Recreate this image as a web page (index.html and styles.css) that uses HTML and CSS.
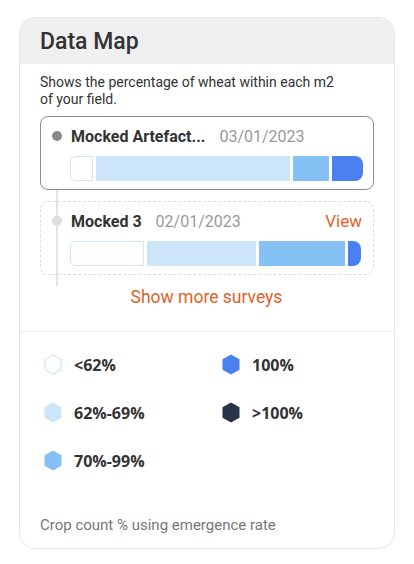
FILE: index.html
```html
<!DOCTYPE html>
<html>
<head>
<meta charset="utf-8">
<link rel="stylesheet" href="styles.css">
</head>
<body>
<div class="card">
  <div class="card-header"><h1 class="title">Data Map</h1></div>
  <div class="card-body">
    <p class="desc">Shows the percentage of wheat within each m2<br>of your field.</p>
    <div class="surveys">
      <div class="survey survey-active">
        <div class="survey-head">
          <span class="dot"></span>
          <span class="name">Mocked Artefact...</span>
          <span class="date">03/01/2023</span>
        </div>
        <div class="bar">
          <span class="seg seg-empty" style="width:23px"></span>
          <span class="seg seg-light" style="width:194px"></span>
          <span class="seg seg-mid" style="width:36px"></span>
          <span class="seg seg-blue" style="width:31px"></span>
        </div>
      </div>
      <div class="survey survey-other">
        <div class="survey-head">
          <span class="dot dot-light"></span>
          <span class="name">Mocked 3</span>
          <span class="date">02/01/2023</span>
          <span class="view">View</span>
        </div>
        <div class="bar">
          <span class="seg seg-empty" style="width:74px"></span>
          <span class="seg seg-light" style="width:109px"></span>
          <span class="seg seg-mid" style="width:86px"></span>
          <span class="seg seg-blue" style="width:13px"></span>
        </div>
      </div>
    </div>
    <div class="more">Show more surveys</div>
  </div>
  <div class="legend">
    <div class="legend-item"><svg class="hex" viewBox="0 0 18 21"><polygon points="9,1 17,5.5 17,15.5 9,20 1,15.5 1,5.5" fill="#fff" stroke="#cfe6f8" stroke-width="1.2"/></svg><span>&lt;62%</span></div>
    <div class="legend-item"><svg class="hex" viewBox="0 0 18 21"><polygon points="9,0.5 17.5,5.3 17.5,15.7 9,20.5 0.5,15.7 0.5,5.3" fill="#4a80f0"/></svg><span>100%</span></div>
    <div class="legend-item"><svg class="hex" viewBox="0 0 18 21"><polygon points="9,0.5 17.5,5.3 17.5,15.7 9,20.5 0.5,15.7 0.5,5.3" fill="#cce5f8"/></svg><span>62%-69%</span></div>
    <div class="legend-item"><svg class="hex" viewBox="0 0 18 21"><polygon points="9,0.5 17.5,5.3 17.5,15.7 9,20.5 0.5,15.7 0.5,5.3" fill="#283347"/></svg><span>&gt;100%</span></div>
    <div class="legend-item"><svg class="hex" viewBox="0 0 18 21"><polygon points="9,0.5 17.5,5.3 17.5,15.7 9,20.5 0.5,15.7 0.5,5.3" fill="#85c1f5"/></svg><span>70%-99%</span></div>
  </div>
  <p class="foot">Crop count % using emergence rate</p>
</div>
</body>
</html>
```

FILE: styles.css
```css
* { box-sizing: border-box; }
body {
  margin: 0;
  padding: 17px 19px 0 19px;
  background: #fff;
  font-family: Roboto, "Liberation Sans", sans-serif;
  color: #333;
}
.card {
  width: 376px;
  height: 532px;
  border: 1px solid #e6e6e6;
  border-radius: 16px;
  overflow: hidden;
  background: #fff;
}
.card-header {
  height: 46px;
  background: #f0f0f0;
  padding: 0 20px;
  display: flex;
  align-items: center;
}
.title {
  margin: 0;
  font-size: 23px;
  font-weight: 500;
  color: #333;
}
.card-body {
  padding: 10px 20px 0 20px;
}
.desc {
  margin: 0 0 8px 0;
  font-size: 14px;
  line-height: 17px;
  color: #333;
}
.surveys {
  position: relative;
  display: flex;
  flex-direction: column;
  gap: 11px;
}
.surveys::before {
  content: "";
  position: absolute;
  left: 16px;
  top: 74px;
  width: 2px;
  height: 96px;
  background: #e3e3e3;
}
.survey {
  position: relative;
  height: 74px;
  border-radius: 8px;
  padding: 9px 11px 0 11px;
}
.survey-active {
  border: 1px solid #8c8c8c;
  background: #fff;
}
.survey-other {
  border: 1px dashed #dcdcdc;
}
.survey-head {
  display: flex;
  align-items: center;
  height: 20px;
}
.dot {
  width: 10px;
  height: 10px;
  border-radius: 50%;
  background: #888;
  margin-right: 9px;
  flex: none;
}
.dot-light { background: #dedede; }
.name {
  font-size: 16px;
  font-weight: 700;
  color: #333;
  margin-right: 14px;
}
.date {
  font-size: 16px;
  color: #999;
}
.view {
  margin-left: auto;
  font-size: 17px;
  color: #e0622a;
}
.bar {
  display: flex;
  gap: 3px;
  height: 25px;
  margin: 10px 0 0 18px;
}
.seg { display: block; height: 100%; flex: none; }
.seg-empty {
  background: #fff;
  border: 1px solid #cfe6f8;
  border-radius: 5px 0 0 5px;
}
.seg-light { background: #cce5f8; }
.seg-mid { background: #85c1f5; }
.seg-blue { background: #4a80f0; border-radius: 0 8px 8px 0; }
.more {
  text-align: center;
  font-size: 17.5px;
  color: #e0622a;
  padding: 12px 0 0 0;
  height: 56px;
  margin-right: 1px;
}
.legend {
  border-top: 1px solid #eee;
  padding: 22px 0 0 24px;
  display: grid;
  grid-template-columns: 178px 150px;
  grid-auto-rows: 48px;
}
.legend-item {
  display: flex;
  align-items: flex-start;
  gap: 12px;
  font-family: "Open Sans", sans-serif;
  font-weight: 700;
  font-size: 16px;
  color: #333;
}
.legend-item span { line-height: 22px; }
.hex { width: 18px; height: 21px; flex: none; }
.foot {
  margin: 0;
  padding: 18px 0 0 20px;
  font-size: 15px;
  color: #777;
}
```
